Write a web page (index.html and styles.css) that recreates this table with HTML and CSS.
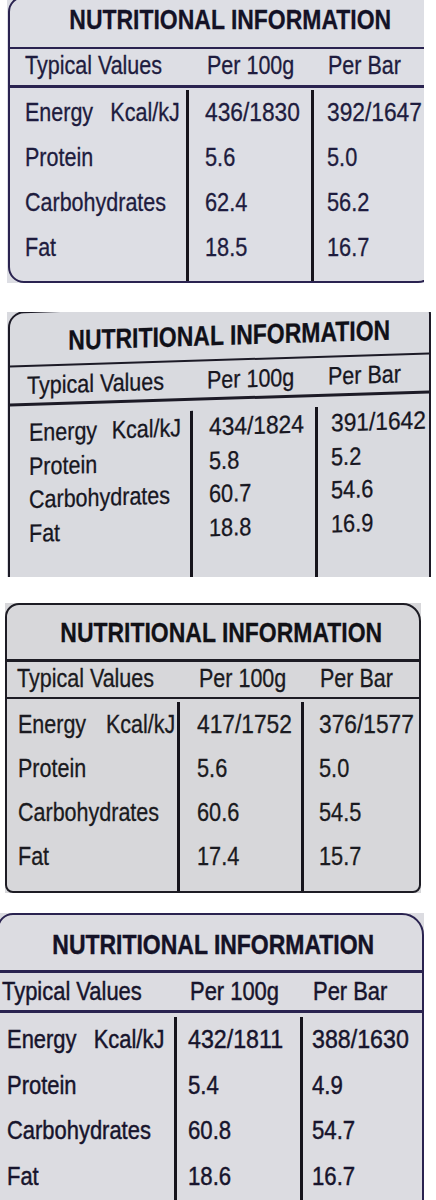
FILE: index.html
```html
<!DOCTYPE html>
<html lang="en">
<head>
    <meta charset="UTF-8">
    <meta name="viewport" content="width=device-width, initial-scale=1.0">
    <title>Nutritional Information</title>
    <link rel="stylesheet" href="styles.css">
</head>
<body>
    <div class="sheet">
        <!-- label 1 -->
        <div class="photo p1">
            <div class="label">
                <div class="title"><span>NUTRITIONAL INFORMATION</span></div>
                <div class="head">
                    <span class="h1">Typical Values</span>
                    <span class="h2">Per 100g</span>
                    <span class="h3">Per Bar</span>
                </div>
                <div class="body">
                    <div class="col c1">
                        <p>Energy<span class="unit">Kcal/kJ</span></p>
                        <p>Protein</p>
                        <p>Carbohydrates</p>
                        <p>Fat</p>
                    </div>
                    <div class="col c2">
                        <p>436/1830</p>
                        <p>5.6</p>
                        <p>62.4</p>
                        <p>18.5</p>
                    </div>
                    <div class="col c3">
                        <p>392/1647</p>
                        <p>5.0</p>
                        <p>56.2</p>
                        <p>16.7</p>
                    </div>
                </div>
            </div>
        </div>

        <!-- label 2 -->
        <div class="photo p2">
            <div class="label">
                <div class="title"><span>NUTRITIONAL INFORMATION</span></div>
                <div class="head">
                    <span class="h1">Typical Values</span>
                    <span class="h2">Per 100g</span>
                    <span class="h3">Per Bar</span>
                </div>
                <div class="body">
                    <div class="col c1">
                        <p>Energy<span class="unit">Kcal/kJ</span></p>
                        <p>Protein</p>
                        <p>Carbohydrates</p>
                        <p>Fat</p>
                    </div>
                    <div class="col c2">
                        <p>434/1824</p>
                        <p>5.8</p>
                        <p>60.7</p>
                        <p>18.8</p>
                    </div>
                    <div class="col c3">
                        <p>391/1642</p>
                        <p>5.2</p>
                        <p>54.6</p>
                        <p>16.9</p>
                    </div>
                </div>
            </div>
        </div>

        <!-- label 3 -->
        <div class="photo p3">
            <div class="label">
                <div class="title"><span>NUTRITIONAL INFORMATION</span></div>
                <div class="head">
                    <span class="h1">Typical Values</span>
                    <span class="h2">Per 100g</span>
                    <span class="h3">Per Bar</span>
                </div>
                <div class="body">
                    <div class="col c1">
                        <p>Energy<span class="unit">Kcal/kJ</span></p>
                        <p>Protein</p>
                        <p>Carbohydrates</p>
                        <p>Fat</p>
                    </div>
                    <div class="col c2">
                        <p>417/1752</p>
                        <p>5.6</p>
                        <p>60.6</p>
                        <p>17.4</p>
                    </div>
                    <div class="col c3">
                        <p>376/1577</p>
                        <p>5.0</p>
                        <p>54.5</p>
                        <p>15.7</p>
                    </div>
                </div>
            </div>
        </div>

        <!-- label 4 -->
        <div class="photo p4">
            <div class="label">
                <div class="title"><span>NUTRITIONAL INFORMATION</span></div>
                <div class="head">
                    <span class="h1">Typical Values</span>
                    <span class="h2">Per 100g</span>
                    <span class="h3">Per Bar</span>
                </div>
                <div class="body">
                    <div class="col c1">
                        <p>Energy<span class="unit">Kcal/kJ</span></p>
                        <p>Protein</p>
                        <p>Carbohydrates</p>
                        <p>Fat</p>
                    </div>
                    <div class="col c2">
                        <p>432/1811</p>
                        <p>5.4</p>
                        <p>60.8</p>
                        <p>18.6</p>
                    </div>
                    <div class="col c3">
                        <p>388/1630</p>
                        <p>4.9</p>
                        <p>54.7</p>
                        <p>16.7</p>
                    </div>
                </div>
            </div>
        </div>
    </div>
</body>
</html>
```

FILE: styles.css
```css
body {
    margin: 0;
    background-color: #fff;
    font-family: "Liberation Sans", Arial, sans-serif;
    color: #1e1c3e;
}
.sheet {
    display: flex;
    flex-direction: column;
    align-items: flex-start;
}
.photo {
    flex: none;
    overflow: hidden;
}
.label {
    box-sizing: border-box;
    display: flex;
    flex-direction: column;
    border: 2px solid #2a2350;
    -webkit-text-stroke: 0.3px currentColor;
}
.title {
    font-size: 28px;
    font-weight: bold;
    line-height: 32px;
    text-align: center;
    white-space: nowrap;
    color: #141226;
    border-bottom: 2px solid #2a2350;
}
/* the print face is a condensed grotesque: squeeze Liberation Sans to match */
.title span {
    display: inline-block;
    transform: scaleX(0.82);
}
.head span, .col p {
    transform: scaleX(0.86);
    transform-origin: 0 50%;
}
.c2 p, .c3 p {
    transform: scaleX(0.87);
}
.c2 p:first-child, .c3 p:first-child {
    transform: scaleX(0.91);
}
.head, .body {
    display: grid;
}
.head {
    font-size: 25px;
    line-height: 30px;
    white-space: nowrap;
    border-bottom: 3px solid #2a2350;
}
.body {
    flex: 1;
    font-size: 25px;
}
.col p {
    margin: 0;
    white-space: nowrap;
}
.c2, .c3 {
    border-left: 3px solid #16141c;
}

/* label 1 */
.p1 {
    margin-left: 7px;
    width: 417px;
    height: 283px;
    background-color: #dddee4;
}
.p1 .label {
    margin: -4px 0 0 1px;
    width: 426px;
    height: 287px;
    border-radius: 16px;
}
.p1 .title { padding: 6px 0 11px 18px; }
.p1 .head { padding: 1px 0 5px; }
.p1 .head, .p1 .body { grid-template-columns: 176px 125px 1fr; }
.p1 .h1 { margin-left: 15px; }
.p1 .h2 { margin-left: 21px; }
.p1 .h3 { margin-left: 17px; }
.p1 .body { padding-top: 2px; }
.p1 .col p { line-height: 45px; }
.p1 .c1 { padding-left: 15px; }
.p1 .c2 { padding-left: 16px; }
.p1 .c3 { padding-left: 13px; }
.p1 .unit { margin-left: 20px; }

/* label 2, photographed a little askew */
.p2 {
    margin: 29px 0 0 7px;
    width: 424px;
    height: 265px;
    background-color: #d9dadf;
    color: #17161f;
}
.p2 .label {
    margin: -7px 0 0 1px;
    width: 423px;
    height: 297px;
    border-radius: 16px;
    border-color: #1c1a26;
    transform: skewY(-1.8deg);
}
.p2 .title { padding: 13px 0 7px 19px; border-bottom-color: #1c1a26; color: #101018; }
.p2 .head { padding: 3px 0 3px; border-bottom-color: #1c1a26; }
.p2 .head, .p2 .body { grid-template-columns: 180px 125px 1fr; }
.p2 .h1 { margin-left: 17px; }
.p2 .h2 { margin-left: 17px; }
.p2 .h3 { margin-left: 13px; }
.p2 .body { padding-top: 10px; }
.p2 .col p { line-height: 33.5px; }
.p2 .c1 { padding-left: 19px; }
.p2 .c2 { padding-left: 16px; }
.p2 .c3 { padding-left: 13px; }
.p2 .unit { margin-left: 17px; }

/* label 3 */
.p3 {
    margin: 26px 0 0 5px;
    width: 416px;
    height: 290px;
    background-color: #d7d7da;
    color: #1a1a20;
}
.p3 .label {
    width: 416px;
    height: 290px;
    border-radius: 14px 18px 8px 8px;
    border-color: #1d1c24;
}
.p3 .title { padding: 12px 0 10px 17px; border-bottom: 3px solid #1d1c24; color: #111116; }
.p3 .head { padding: 1px 0 4px; border-bottom: 2px solid #1d1c24; }
.p3 .head, .p3 .body { grid-template-columns: 170px 124px 1fr; }
.p3 .h1 { margin-left: 10px; }
.p3 .h2 { margin-left: 22px; }
.p3 .h3 { margin-left: 19px; }
.p3 .body { padding-top: 3px; }
.p3 .col p { line-height: 44px; }
.p3 .c1 { padding-left: 11px; }
.p3 .c2 { padding-left: 17px; }
.p3 .c3 { padding-left: 15px; }
.p3 .unit { margin-left: 23px; }

/* label 4 */
.p4 {
    margin-top: 20px;
    width: 424px;
    height: 300px;
    background-color: #dcdce1;
    color: #17142c;
}
.p4 .label {
    margin-left: -3px;
    width: 427px;
    height: 320px;
    border-radius: 16px 22px 0 0;
    -webkit-text-stroke: 0.45px currentColor;
}
.p4 .title { padding: 14px 0 9px 6px; border-bottom: 3px solid #2a2350; }
.p4 .head { padding: 3px 0 4px; font-size: 25.5px; }
.p4 .head, .p4 .body { grid-template-columns: 175px 126px 1fr; }
.p4 .h1 { margin-left: 3px; }
.p4 .h2 { margin-left: 16px; }
.p4 .h3 { margin-left: 13px; }
.p4 .body { padding-top: 4px; font-size: 25.5px; }
.p4 .col p { line-height: 45.5px; }
.p4 .c1 { padding-left: 8px; }
.p4 .c2 { padding-left: 11px; }
.p4 .c3 { padding-left: 9px; }
.p4 .unit { margin-left: 20px; }
```
